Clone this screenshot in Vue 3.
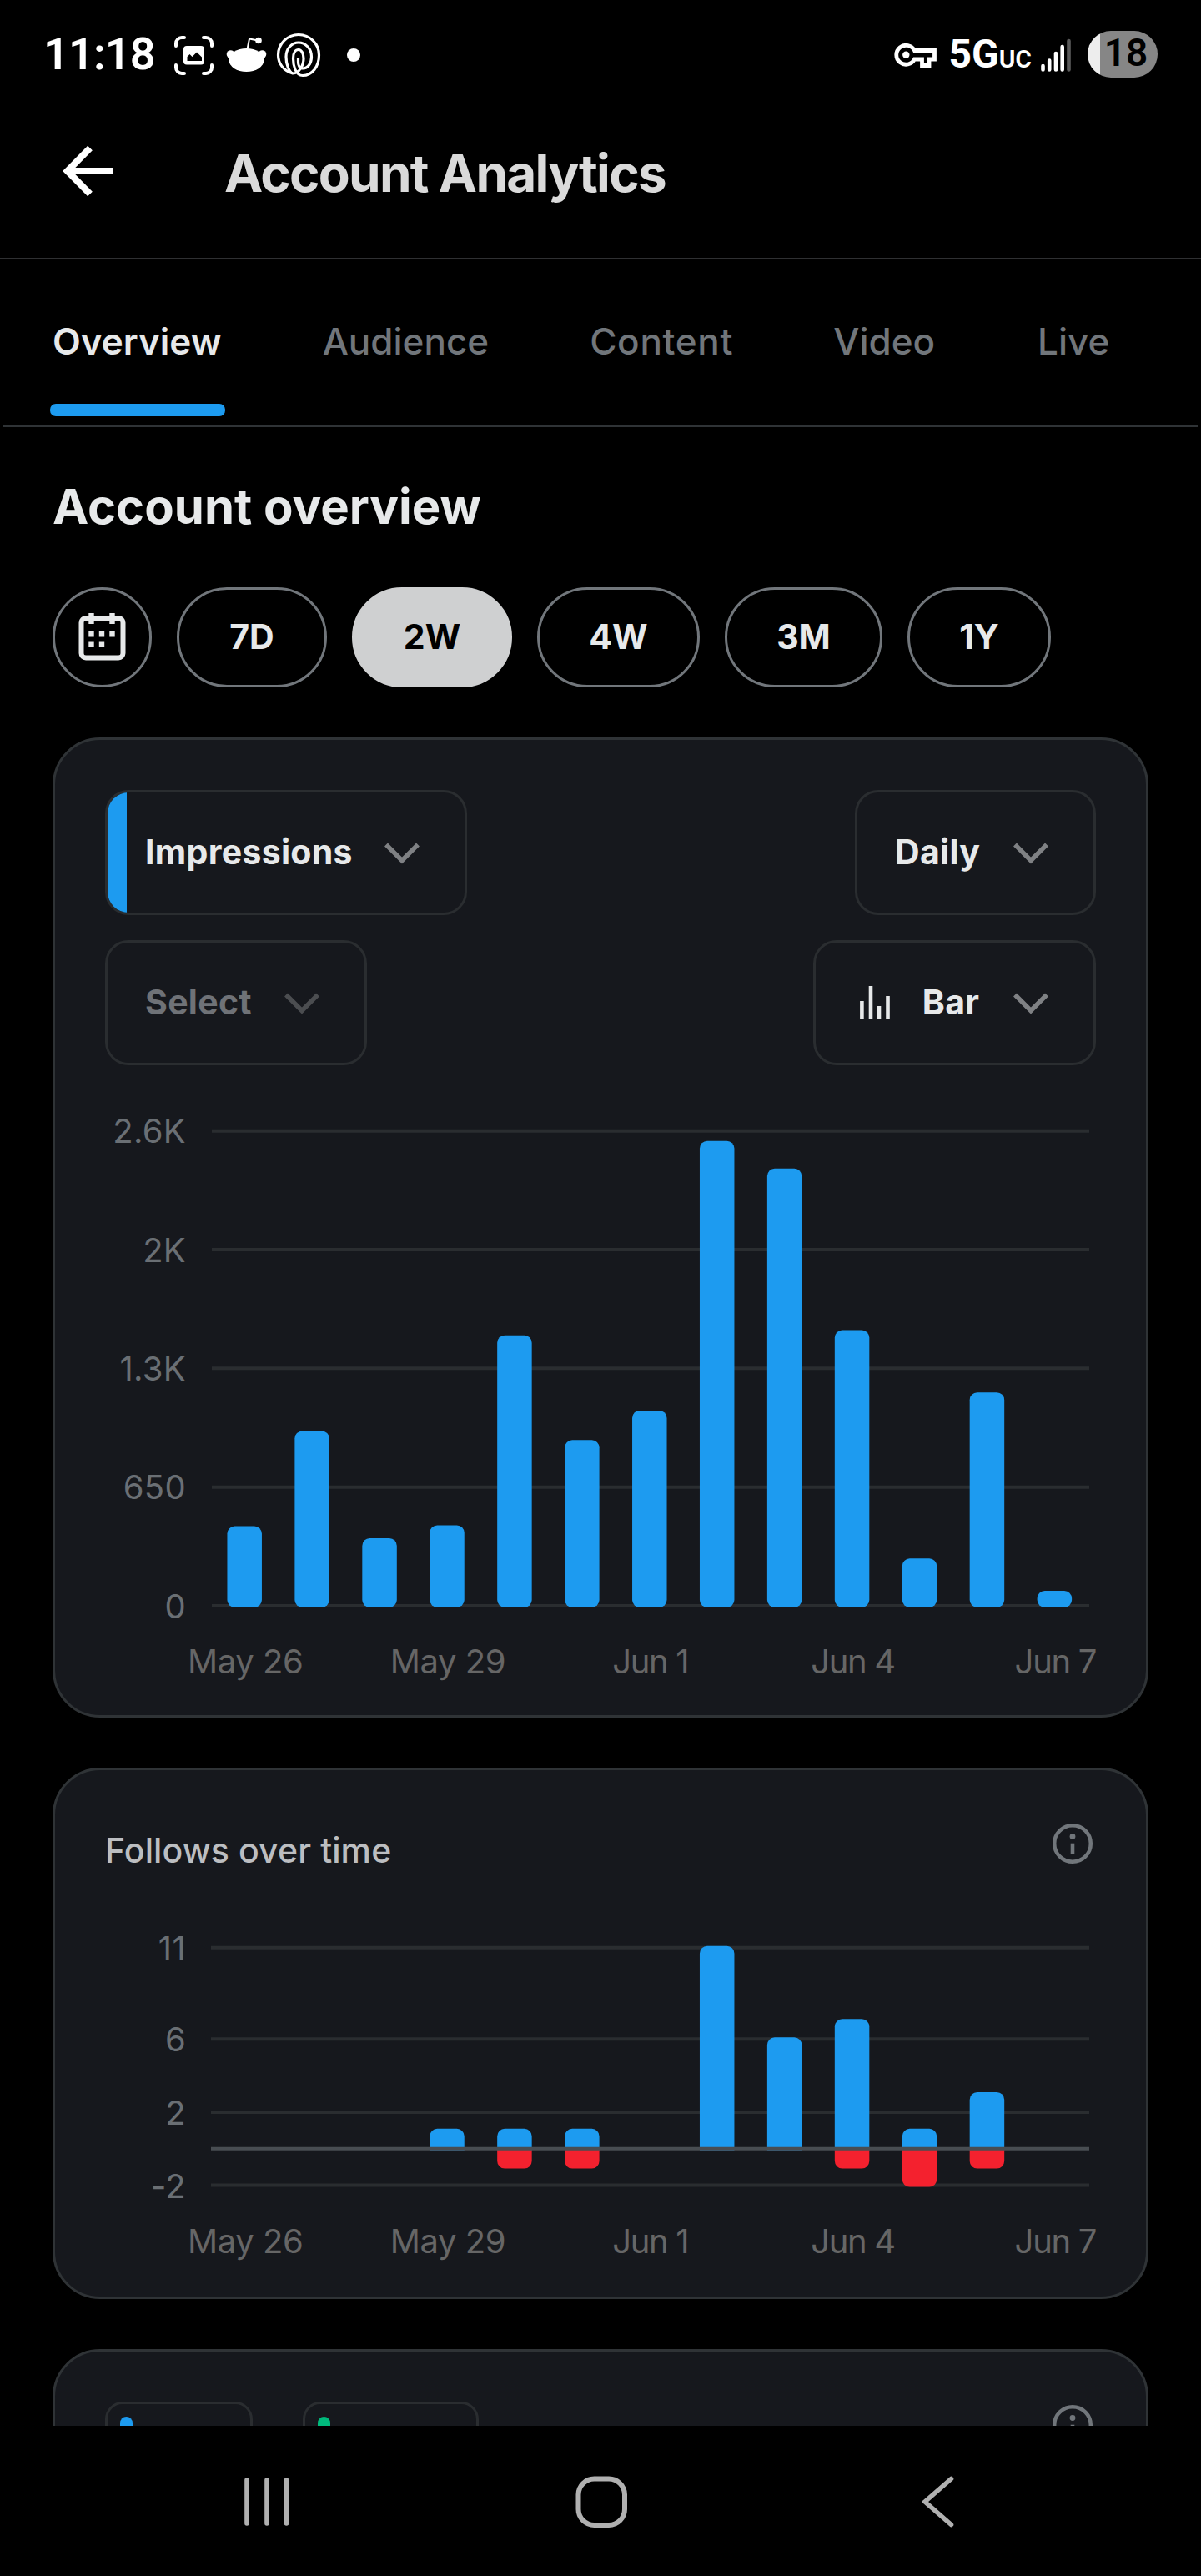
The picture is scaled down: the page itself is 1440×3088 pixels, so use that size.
<script setup>
const tabs = ['Overview', 'Audience', 'Content', 'Video', 'Live']
const ranges = ['7D', '2W', '4W', '3M', '1Y']
const xLabels = [
  { text: 'May 26', day: 0 },
  { text: 'May 29', day: 3 },
  { text: 'Jun 1', day: 6 },
  { text: 'Jun 4', day: 9 },
  { text: 'Jun 7', day: 12 }
]

// Shared horizontal scale: 13 days across the plot area
const PLOT_LEFT = 128
const PLOT_RIGHT = 1180
const STEP = 80.93
const BAR = 41.5
const center = (day) => 167.2 + day * STEP

const impressions = [427, 948, 361, 432, 1472, 898, 1060, 2536, 2385, 1500, 250, 1159, 73]
const impTicks = [
  { label: '2.6K', value: 2600 },
  { label: '2K', value: 1950 },
  { label: '1.3K', value: 1300 },
  { label: '650', value: 650 },
  { label: '0', value: 0 }
]
const impY = (v) => 648 - v * 0.21896

const follows = [0, 0, 0, 1, 1, 1, 0, 11, 6, 7, 1, 3, 0]
const unfollows = [0, 0, 0, 0, 1, 1, 0, 0, 0, 1, 2, 1, 0]
const folTicks = [
  { label: '11', value: 11 },
  { label: '6', value: 6 },
  { label: '2', value: 2 },
  { label: '-2', value: -2 }
]
const folY = (v) => 319.7 - v * 21.91

const upBar = (day, v) => {
  const x = center(day) - BAR / 2
  const top = folY(v) - 2
  return `M${x} 321.7V${top + 9}a9 9 0 0 1 9 -9h${BAR - 18}a9 9 0 0 1 9 9V321.7z`
}
const downBar = (day, v) => {
  const x = center(day) - BAR / 2
  const bottom = folY(-v) + 2
  return `M${x} 319.7V${bottom - 9}a9 9 0 0 0 9 9h${BAR - 18}a9 9 0 0 0 9 -9V319.7z`
}
</script>

<template>
  <div class="screen">
    <header class="status">
      <div class="status-left">
        <span class="time">11:18</span>
        <svg class="i-shot" width="47" height="47" viewBox="0 0 47 47">
          <g fill="none" stroke="#fff" stroke-width="4" stroke-linecap="round">
            <path d="M2 12V9a7 7 0 0 1 7-7h3M35 2h3a7 7 0 0 1 7 7v3M45 35v3a7 7 0 0 1-7 7h-3M12 45H9a7 7 0 0 1-7-7v-3" />
          </g>
          <rect x="11" y="12" width="25" height="22.500" rx="4" fill="#fff" />
          <path d="M15.500 30v-5l3-3 3 3 5.500-5.500 6 6V30z" fill="#000" />
        </svg>
        <svg class="i-reddit" width="49" height="46" viewBox="0 0 49 46">
          <ellipse cx="24.500" cy="29" rx="21" ry="14" fill="#fff" />
          <circle cx="5.500" cy="22" r="4.800" fill="#fff" />
          <circle cx="43.500" cy="22" r="4.800" fill="#fff" />
          <path d="M25.500 16 28 3.500 38 5.500" fill="none" stroke="#fff" stroke-width="2" />
          <circle cx="39" cy="5.500" r="3.800" fill="#fff" />
        </svg>
        <svg class="i-loop" width="52" height="52" viewBox="0 0 52 52">
          <path d="M19 48C8 45 1.500 36 1.500 26A24.500 24.500 0 0 1 50.500 26C50.500 40 42 50.500 31 50.500 22 50.500 19.500 38 19.500 30 19.500 23 22.500 19.500 26 19.500S32 24 32 30C32 38 27 48 19 48 14 46 11 36 11 28 11 18 18 11 26 11S41.500 18 41.500 28C41.500 36 37 42 31 42 27 42 25.500 38 25.500 34V29" fill="none" stroke="#fff" stroke-width="3.200" />
        </svg>
        <i class="dot"></i>
      </div>
      <div class="status-right">
        <svg class="i-key" width="52" height="32" viewBox="0 0 52 32">
          <path d="M24.500 10.500H48.500V21H42V28.500H33.500V21H24.500A11.500 11.500 0 1 1 24.500 10.500Z" fill="none" stroke="#fff" stroke-width="4.800" />
          <circle cx="14.300" cy="15.700" r="4.200" fill="#fff" />
        </svg>
        <span class="net">5G<small>UC</small></span>
        <svg class="i-signal" width="36" height="40" viewBox="0 0 36 40">
          <g stroke-width="4.600" stroke-linecap="round" stroke="#fff">
            <path d="M2.500 33v4.500M10.200 26.500v11M18 18v19.500M25.700 10v27.500" />
            <path d="M33.500 3v34.500" stroke="#5a5a5a" />
          </g>
        </svg>
        <span class="battery">18</span>
      </div>
    </header>

    <div class="appbar">
      <svg class="back" width="64" height="64" viewBox="0 0 64 64">
        <path d="M62 32H8M34 4.500 6.800 32 34 59.500" fill="none" stroke="#fff" stroke-width="8" />
      </svg>
      <h1>Account Analytics</h1>
    </div>

    <nav class="tabs">
      <span v-for="(t, i) in tabs" :key="t" class="tab" :class="[{ active: i === 0 }, t.toLowerCase()]">{{ t }}</span>
    </nav>

    <main>
      <h2>Account overview</h2>

      <div class="ranges">
        <button class="pill calendar">
          <svg width="57" height="57" viewBox="0 0 57 57">
            <rect x="3.500" y="6" width="50" height="47.500" rx="5.500" fill="none" stroke="#e7e9ea" stroke-width="6" />
            <path d="M15.500 0v13M40.500 0v13" stroke="#e7e9ea" stroke-width="6.400" />
            <path d="M12.300 22h6.400v6.400h-6.400zM24.800 22h6.400v6.400h-6.400zM37.300 22h6.400v6.400h-6.400zM12.300 34.600h6.400V41h-6.400zM24.800 34.600h6.400V41h-6.400z" fill="#e7e9ea" />
          </svg>
        </button>
        <button v-for="r in ranges" :key="r" class="pill" :class="['p' + r, { selected: r === '2W' }]">{{ r }}</button>
      </div>

      <section class="card overview-card">
        <div class="row">
          <button class="select metric">
            <span>Impressions</span>
            <svg class="chev" width="42" height="26" viewBox="0 0 42 26"><path d="M2 2.500 21 21.500 40 2.500" /></svg>
          </button>
          <button class="select daily">
            <span>Daily</span>
            <svg class="chev" width="42" height="26" viewBox="0 0 42 26"><path d="M2 2.500 21 21.500 40 2.500" /></svg>
          </button>
        </div>
        <div class="row">
          <button class="select second">
            <span>Select</span>
            <svg class="chev" width="42" height="26" viewBox="0 0 42 26"><path d="M2 2.500 21 21.500 40 2.500" /></svg>
          </button>
          <button class="select kind">
            <svg class="i-bars" width="36" height="41" viewBox="0 0 36 41">
              <path d="M2.400 18v22M13 0v40M23 24v16M33.500 12v28" stroke="#e7e9ea" stroke-width="4.600" />
            </svg>
            <span>Bar</span>
            <svg class="chev" width="42" height="26" viewBox="0 0 42 26"><path d="M2 2.500 21 21.500 40 2.500" /></svg>
          </button>
        </div>

        <svg class="chart" width="1188" height="779" viewBox="0 0 1188 779">
          <g v-for="t in impTicks" :key="t.label">
            <line :x1="PLOT_LEFT" :x2="PLOT_RIGHT" :y1="impY(t.value)" :y2="impY(t.value)" class="grid" />
            <text class="y" x="97" :y="impY(t.value) + 14.500">{{ t.label }}</text>
          </g>
          <rect v-for="(v, i) in impressions" :key="i" class="up" :x="center(i) - BAR / 2" :y="impY(v) - 2" :width="BAR" :height="650 - impY(v) + 2" rx="9" />
          <text v-for="l in xLabels" :key="l.text" class="x" :class="l.text.slice(0, 3).toLowerCase()" :x="center(l.day) + 1" y="729">{{ l.text }}</text>
        </svg>
      </section>

      <section class="card">
        <div class="card-head">
          <h3>Follows over time</h3>
          <svg class="info" width="56" height="56" viewBox="0 0 56 56">
            <circle cx="28" cy="28" r="21.800" fill="none" stroke="#71767b" stroke-width="4.500" />
            <circle cx="28" cy="19.500" r="3.400" fill="#71767b" />
            <path d="M28 27.700V40" stroke="#71767b" stroke-width="4.600" />
          </svg>
        </div>
        <svg class="chart" width="1188" height="497" viewBox="0 0 1188 497">
          <g v-for="t in folTicks" :key="t.label">
            <line :x1="PLOT_LEFT - 1" :x2="PLOT_RIGHT" :y1="folY(t.value)" :y2="folY(t.value)" class="grid" />
            <text class="y" x="97" :y="folY(t.value) + 15">{{ t.label }}</text>
          </g>
          <template v-for="(v, i) in follows" :key="'u' + i">
            <path v-if="v" class="up" :d="upBar(i, v)" />
          </template>
          <template v-for="(v, i) in unfollows" :key="'d' + i">
            <path v-if="v" class="down" :d="downBar(i, v)" />
          </template>
          <line :x1="PLOT_LEFT - 1" :x2="PLOT_RIGHT" y1="319.700" y2="319.700" class="zero" />
          <text v-for="l in xLabels" :key="l.text" class="x" :class="l.text.slice(0, 3).toLowerCase()" :x="center(l.day) + 1" y="445">{{ l.text }}</text>
        </svg>
      </section>

      <section class="card last">
        <div class="legend">
          <span class="chip a"><i></i></span>
          <span class="chip b"><i></i></span>
        </div>
        <svg class="info" width="56" height="56" viewBox="0 0 56 56">
          <circle cx="28" cy="28" r="21.800" fill="none" stroke="#71767b" stroke-width="4.500" />
          <circle cx="28" cy="19.500" r="3.400" fill="#71767b" />
          <path d="M28 27.700V40" stroke="#71767b" stroke-width="4.600" />
        </svg>
      </section>
    </main>

    <footer class="sysnav">
      <svg class="recents" width="56" height="62" viewBox="0 0 56 62">
        <path d="M4 5v52M28 5v52M51.500 5v52" stroke="#b0b0b0" stroke-width="5.600" stroke-linecap="round" />
      </svg>
      <svg class="home" width="64" height="64" viewBox="0 0 64 64">
        <rect x="4.500" y="4.500" width="55.500" height="55.500" rx="19" fill="none" stroke="#b0b0b0" stroke-width="6" />
      </svg>
      <svg class="prev" width="40" height="64" viewBox="0 0 40 64">
        <path d="M35.500 4.500 4 32 35.500 59.500" fill="none" stroke="#b0b0b0" stroke-width="5.600" stroke-linecap="round" />
      </svg>
    </footer>
  </div>
</template>

<style>
html,
body {
  background: #000;
}
</style>

<style scoped>
* {
  box-sizing: border-box;
}
svg {
  display: block;
  flex: none;
  overflow: visible;
}
h1,
h2,
h3 {
  margin: 0;
}
.screen {
  width: 1440px;
  height: 3088px;
  display: flex;
  flex-direction: column;
  overflow: hidden;
  background: #000;
  color: #e7e9ea;
  font-family: Inter, 'Liberation Sans', sans-serif;
}

/* Status bar */
.status {
  flex: none;
  height: 106px;
  padding: 26px 52px 0 52px;
  display: flex;
  justify-content: space-between;
  align-items: center;
  color: #fff;
  font-family: Roboto, sans-serif;
}
.status-left,
.status-right {
  display: flex;
  align-items: center;
}
.time {
  width: 157px;
  padding-bottom: 3px;
  font-size: 54px;
  line-height: 60px;
  font-weight: 650;
  letter-spacing: -0.9px;
}
.i-reddit {
  margin-left: 15px;
}
.i-loop {
  margin-left: 12px;
}
.dot {
  width: 16px;
  height: 16px;
  margin-left: 32px;
  border-radius: 50%;
  background: #fff;
}
.i-key {
  margin-right: 13px;
}
.net {
  padding-top: 3px;
  font-size: 48px;
  line-height: 60px;
  font-weight: 700;
}
.net small {
  font-size: 30px;
  font-weight: 600;
}
.i-signal {
  margin: 0 20px 0 11px;
}
.battery {
  width: 84px;
  height: 56px;
  margin-top: -2px;
  padding-left: 8px;
  border-radius: 28px;
  background: linear-gradient(90deg, #ededed 15px, #868686 15px);
  color: #000;
  font-size: 46px;
  line-height: 53px;
  font-weight: 600;
  text-align: center;
}

/* App bar */
.appbar {
  flex: none;
  height: 204px;
  display: flex;
  align-items: center;
  padding-left: 74px;
  border-bottom: 1px solid #2f3032;
}
.back {
  margin-bottom: 5px;
}
h1 {
  margin-left: 131px;
  color: #dadada;
  font-size: 62px;
  font-weight: 650;
  letter-spacing: -1.7px;
}

/* Tabs */
.tabs {
  flex: none;
  height: 202px;
  margin: 0 3px;
  padding-left: 60px;
  display: flex;
  border-bottom: 3px solid #2f3336;
}
.tab {
  position: relative;
  flex: none;
  color: #71767b;
  font-size: 44px;
  line-height: 198px;
  font-weight: 500;
}
.tab + .tab {
  margin-left: 121px;
}
.tab.content {
  letter-spacing: 0.7px;
}
.tab.content + .tab {
  margin-left: 120px;
}
.tab.live {
  margin-left: 123px;
}
.tab.active {
  color: #e7e9ea;
  font-weight: 600;
}
.tab.active::after {
  content: '';
  position: absolute;
  left: -3px;
  right: -4px;
  bottom: 10px;
  height: 15px;
  border-radius: 7px;
  background: #1d9bf0;
}

/* Content */
main {
  flex: none;
  height: 2396px;
  padding: 0 63px;
  overflow: hidden;
}
h2 {
  height: 192px;
  font-size: 58px;
  line-height: 190px;
  font-weight: 670;
  letter-spacing: 0;
}
.ranges {
  display: flex;
  gap: 30px;
}
button {
  margin: 0;
  padding: 0;
  background: none;
  color: inherit;
  font-family: inherit;
}
.pill {
  display: flex;
  align-items: center;
  justify-content: center;
  height: 120px;
  padding-bottom: 2px;
  border: 3px solid #71767b;
  border-radius: 60px;
  font-size: 41px;
  font-weight: 680;
}
.calendar {
  width: 119px;
  padding-bottom: 1px;
}
.p7D {
  width: 180px;
}
.p2W {
  width: 192px;
}
.p4W {
  width: 195px;
}
.p3M {
  width: 189px;
}
.p1Y {
  width: 172px;
}
.pill.selected {
  border-color: #cfd0d1;
  background: #cfd0d1;
  color: #000;
}

.card {
  margin-top: 60px;
  padding: 60px 60px 0;
  border: 3px solid #2f3336;
  border-radius: 57px;
  background: #16181d;
}
.row {
  display: flex;
  justify-content: space-between;
}
.row + .row {
  margin-top: 30px;
}
.select {
  position: relative;
  display: flex;
  align-items: center;
  justify-content: space-between;
  height: 150px;
  padding: 0 54px 0 45px;
  border: 3px solid #2a2d30;
  border-radius: 28px;
  overflow: hidden;
  font-size: 41px;
  font-weight: 650;
  letter-spacing: 0.3px;
}
.select span {
  padding-bottom: 2px;
}
.metric {
  width: 434px;
}
.metric::before {
  content: '';
  position: absolute;
  left: 0;
  top: 0;
  bottom: 0;
  width: 23px;
  background: #1d9bf0;
}
.daily {
  width: 289px;
}
.second {
  width: 314px;
  color: #6f7277;
}
.second .chev {
  opacity: 0.5;
}
.kind {
  width: 339px;
  padding-left: 53px;
}
.i-bars {
  margin-right: -2px;
}
.chev {
  margin-top: 2px;
}
.chev path {
  fill: none;
  stroke: #7f8184;
  stroke-width: 5.5;
}

/* Charts */
.grid {
  stroke: #2a2d30;
  stroke-width: 4;
}
.zero {
  stroke: #484d52;
  stroke-width: 4;
}
.up {
  fill: #1d9bf0;
}
.down {
  fill: #f4212e;
}
.chart text {
  font-size: 40px;
}
.y {
  fill: #6a6f74;
  text-anchor: end;
  letter-spacing: 0.3px;
}
.x {
  fill: #666;
  text-anchor: middle;
  letter-spacing: -0.4px;
}
.x.jun {
  letter-spacing: -1.3px;
}
.card-head {
  display: flex;
  justify-content: space-between;
  height: 74px;
}
h3 {
  color: #bcbec1;
  font-size: 41px;
  line-height: 73px;
  font-weight: 500;
  letter-spacing: 0.1px;
}

.last {
  display: flex;
  justify-content: space-between;
  align-items: flex-start;
  height: 300px;
}
.legend {
  display: flex;
  gap: 60px;
}
.chip {
  height: 90px;
  padding: 15px;
  border: 3px solid #2a2d30;
  border-radius: 21px;
}
.chip i {
  display: block;
  width: 15px;
  height: 54px;
  border-radius: 8px;
}
.chip.a {
  width: 177px;
}
.chip.b {
  width: 211px;
}
.a i {
  background: #1d9bf0;
}
.b i {
  background: #00ba7c;
}

/* System navigation */
.sysnav {
  flex: none;
  height: 180px;
  padding: 2px 0 0 292px;
  display: flex;
  align-items: center;
}
.home {
  margin-left: 341px;
}
.prev {
  margin-left: 352px;
}
</style>
